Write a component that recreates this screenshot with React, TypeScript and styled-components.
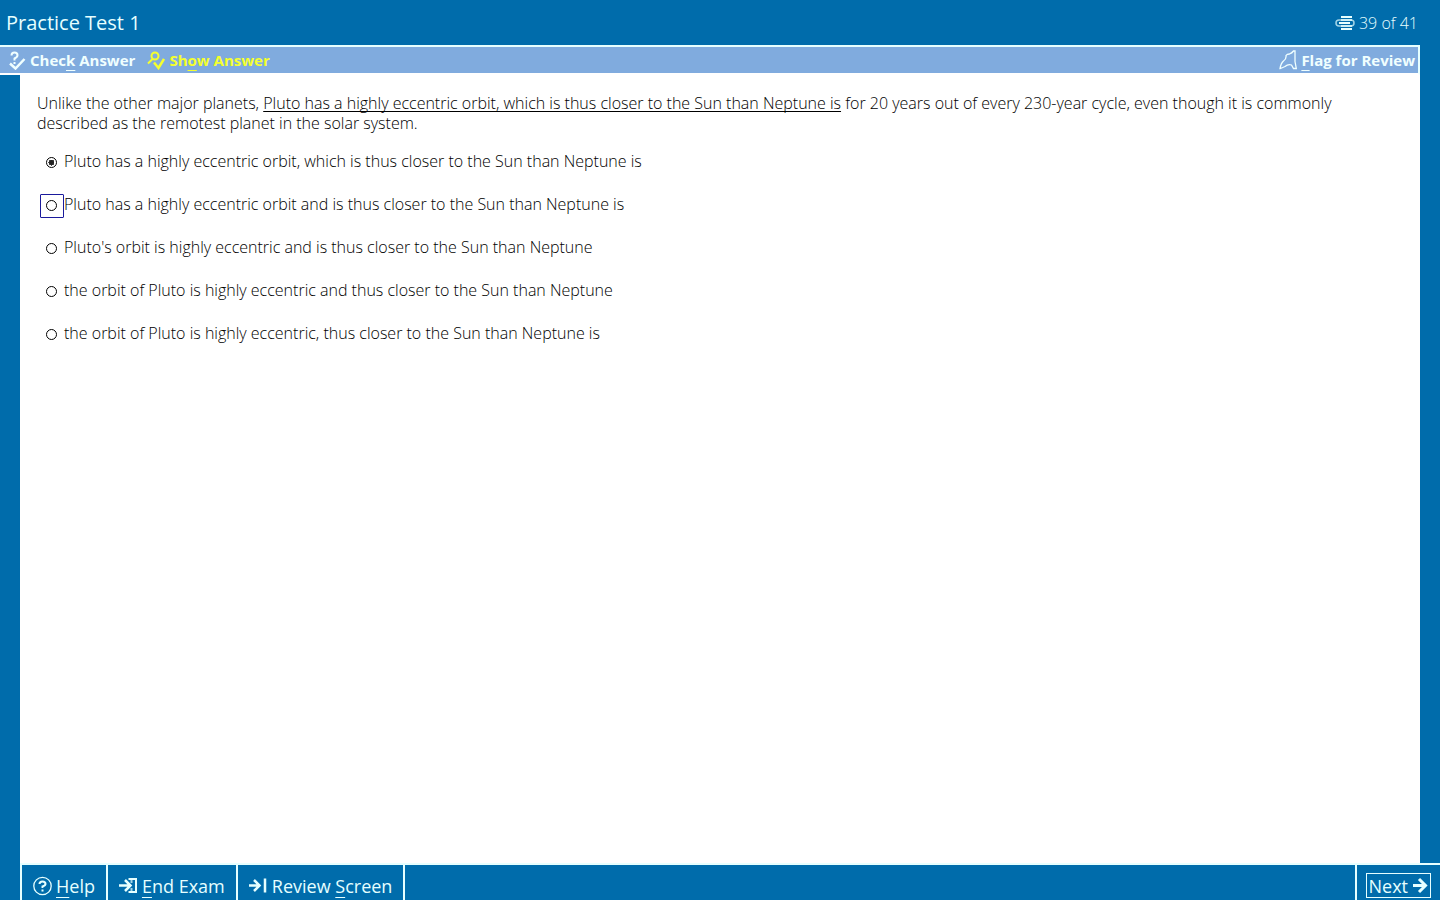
import React, { useState } from "react";
import styled, { createGlobalStyle } from "styled-components";

const blue = "#006cab";
const pale = "#e6ffff";

const GlobalStyle = createGlobalStyle`
  *, *::before { box-sizing: border-box; }
  body {
    margin: 0;
    background: ${blue};
    font-family: "Open Sans", "Noto Sans", sans-serif;
  }
`;

const Page = styled.div`
  display: flex;
  flex-direction: column;
  min-height: 100vh;
`;

const TitleBar = styled.header`
  display: flex;
  align-items: center;
  justify-content: space-between;
  height: 45px;
  padding: 0 22px 0 6px;
  color: ${pale};
`;

const Title = styled.h1`
  margin: 0;
  font-size: 20px;
  line-height: 24px;
  font-weight: 400;
`;

const Progress = styled.div`
  display: flex;
  align-items: center;
  gap: 4px;
  font-size: 16px;
  line-height: 20px;
  font-weight: 300;
`;

const Toolbar = styled.nav`
  display: flex;
  align-items: center;
  height: 30px;
  margin-right: 20px;
  padding: 0 3px 0 9px;
  gap: 12px;
  background: #80abde;
  border: 2px solid ${pale};
  border-left: 0;
  border-bottom-color: #fff;
`;

const ToolButton = styled.button<{ $color: string }>`
  display: flex;
  align-items: center;
  gap: 4px;
  padding: 0;
  border: 0;
  background: none;
  color: ${(p) => p.$color};
  font-family: inherit;
  font-size: 15px;
  line-height: 20px;
  font-weight: 700;
  cursor: pointer;
`;

const Spacer = styled.div`
  flex: 1;
`;

const AccessKey = styled.u`
  text-decoration-thickness: 1px;
  text-underline-offset: 4px;
  text-decoration-skip-ink: none;
`;

const Content = styled.main`
  flex: 1;
  margin: 0 20px;
  padding: 18px 17px;
  background: #fff;
  color: #000;
  font-size: 16px;
  line-height: 20px;
  font-weight: 300;
`;

const Question = styled.p`
  margin: 0 0 18px;
`;

const Underlined = styled.u`
  text-underline-offset: 2px;
  text-decoration-thickness: 1px;
  text-decoration-skip-ink: none;
`;

const Options = styled.fieldset`
  display: flex;
  flex-direction: column;
  gap: 19px;
  margin: 0;
  padding: 0 0 0 3px;
  border: 0;
`;

const Option = styled.label`
  display: flex;
  align-items: flex-start;
`;

const Radio = styled.input<{ $current: boolean }>`
  appearance: none;
  display: flex;
  flex: none;
  width: 24px;
  height: 24px;
  margin: 0;
  padding: 5px;
  border: 1px solid ${(p) => (p.$current ? "#1a1a9c" : "transparent")};
  border-radius: 1px;
  outline: none;

  &::before {
    content: "";
    width: 11px;
    height: 11px;
    border: 1px solid #000;
    border-radius: 50%;
    background: #fff;
  }

  &:checked::before {
    background: radial-gradient(circle, #222 0 2px, #555 3px, #fff 3px);
  }
`;

const Footer = styled.footer`
  display: flex;
  height: 37px;
  margin-left: 20px;
  border-top: 2px solid ${pale};
  border-left: 2px solid ${pale};
`;

const NavCell = styled.div<{ $side: "left" | "right" }>`
  display: flex;
  padding: ${(p) => (p.$side === "left" ? "8px 11px 2px" : "8px 9px 2px")};
  border-${(p) => (p.$side === "left" ? "right" : "left")}: 2px solid ${pale};
`;

const NavButton = styled.button<{ $focused?: boolean }>`
  display: flex;
  align-items: center;
  gap: 4px;
  padding: ${(p) => (p.$focused ? "0 3px 0 2px" : "0")};
  border: 0;
  outline: ${(p) => (p.$focused ? `1px solid ${pale}` : "none")};
  outline-offset: -1px;
  background: none;
  color: ${pale};
  font-family: inherit;
  font-size: 18px;
  line-height: 24px;
  cursor: pointer;
`;

const Icon = styled.svg`
  flex: none;
  fill: none;
  stroke: currentColor;
`;

const choices = [
  "Pluto has a highly eccentric orbit, which is thus closer to the Sun than Neptune is",
  "Pluto has a highly eccentric orbit and is thus closer to the Sun than Neptune is",
  "Pluto's orbit is highly eccentric and is thus closer to the Sun than Neptune",
  "the orbit of Pluto is highly eccentric and thus closer to the Sun than Neptune",
  "the orbit of Pluto is highly eccentric, thus closer to the Sun than Neptune is",
];

const PagesIcon = () => (
  <Icon width="20" height="16" viewBox="0 0 20 16" strokeWidth="2">
    <path d="M6 2h11M6 14h11M4 8h11" />
    <rect x="1" y="5" width="18" height="6" rx="3" strokeWidth="1.500" strokeOpacity="0.7" />
    <path d="M6 5h11M6 11h11" strokeWidth="1.500" />
  </Icon>
);

const CheckIcon = () => (
  <Icon width="17" height="19" viewBox="0 0 17 19" strokeWidth="2">
    <path d="M2.500 4.500Q2.500 1.500 5.500 1.500T8.500 4.200Q8.500 6 5.500 7.500V9.500M5.500 11v2" />
    <path d="M1 12.500l5.500 5L15.500 8" strokeWidth="2.500" />
  </Icon>
);

const ShowIcon = () => (
  <Icon width="18" height="19" viewBox="0 0 18 19" strokeWidth="2">
    <circle cx="8" cy="5" r="3.500" />
    <path d="M5.500 8L1 12.500" />
    <path d="M7 11.500l4.500 5.500 5.500-9" strokeWidth="2.500" />
  </Icon>
);

const FlagIcon = () => (
  <Icon width="18" height="20" viewBox="0 0 18 20" strokeWidth="1.300">
    <path d="M1 18.500Q2 13 4.500 11Q7.500 9 7 5.500Q8 4 10.500 4Q13 3 14.500 1H16V11.500L17.300 18.500H14.500L12.500 15Q9 14 6 16.500Q3 18 1 18.500z" />
  </Icon>
);

const HelpIcon = () => (
  <Icon width="19" height="20" viewBox="0 0 19 20">
    <circle cx="9.500" cy="10" r="8.700" strokeWidth="1.300" />
    <path d="M6.500 8Q6.500 5.500 9.500 5.500t3 2.500Q12.500 9.500 9.500 10.500v1.500M9.500 13.500v2" strokeWidth="2" />
  </Icon>
);

const EndIcon = () => (
  <Icon width="19" height="18" viewBox="0 0 19 18" strokeWidth="2.500">
    <path d="M0 8.500h11M6 3l5.500 5.500L6 14" />
    <path d="M9.500 2h7.500v13H9.500" strokeWidth="2" />
    <path d="M12.500 2v4M12.500 11v4" strokeWidth="2" strokeOpacity="0.7" />
  </Icon>
);

const ReviewIcon = () => (
  <Icon width="19" height="18" viewBox="0 0 19 18" strokeWidth="2.500">
    <path d="M0 8.500h10M5 3l5.500 5.500L5 14M16 1.500v14" />
  </Icon>
);

const NextIcon = () => (
  <Icon width="16" height="18" viewBox="0 0 16 18" strokeWidth="3">
    <path d="M1 8.500h12M7 2l6.500 6.500L7 15" />
  </Icon>
);

export default function App() {
  const [selected, setSelected] = useState(0);
  const [current, setCurrent] = useState(1);

  return (
    <Page>
      <GlobalStyle />
      <TitleBar>
        <Title>Practice Test 1</Title>
        <Progress>
          <PagesIcon />
          39 of 41
        </Progress>
      </TitleBar>
      <Toolbar>
        <ToolButton $color="#f0ffff">
          <CheckIcon />
          <span>Chec<AccessKey>k</AccessKey> Answer</span>
        </ToolButton>
        <ToolButton $color="#f4ff2e">
          <ShowIcon />
          <span>Sh<AccessKey>o</AccessKey>w Answer</span>
        </ToolButton>
        <Spacer />
        <ToolButton $color="#f0ffff">
          <FlagIcon />
          <span><AccessKey>F</AccessKey>lag for Review</span>
        </ToolButton>
      </Toolbar>
      <Content>
        <Question>
          Unlike the other major planets,{" "}
          <Underlined>
            Pluto has a highly eccentric orbit, which is thus closer to the Sun than Neptune is
          </Underlined>{" "}
          for 20 years out of every 230-year cycle, even though it is commonly described as the
          remotest planet in the solar system.
        </Question>
        <Options aria-label="Answer choices">
          {choices.map((text, i) => (
            <Option key={text}>
              <Radio
                type="radio"
                name="answer"
                checked={selected === i}
                $current={current === i}
                onChange={() => {
                  setSelected(i);
                  setCurrent(i);
                }}
              />
              <span>{text}</span>
            </Option>
          ))}
        </Options>
      </Content>
      <Footer>
        <NavCell $side="left">
          <NavButton>
            <HelpIcon />
            <span><AccessKey>H</AccessKey>elp</span>
          </NavButton>
        </NavCell>
        <NavCell $side="left">
          <NavButton>
            <EndIcon />
            <span><AccessKey>E</AccessKey>nd Exam</span>
          </NavButton>
        </NavCell>
        <NavCell $side="left">
          <NavButton>
            <ReviewIcon />
            <span>Review <AccessKey>S</AccessKey>creen</span>
          </NavButton>
        </NavCell>
        <Spacer />
        <NavCell $side="right">
          <NavButton $focused>
            <span><AccessKey>N</AccessKey>ext</span>
            <NextIcon />
          </NavButton>
        </NavCell>
      </Footer>
    </Page>
  );
}
